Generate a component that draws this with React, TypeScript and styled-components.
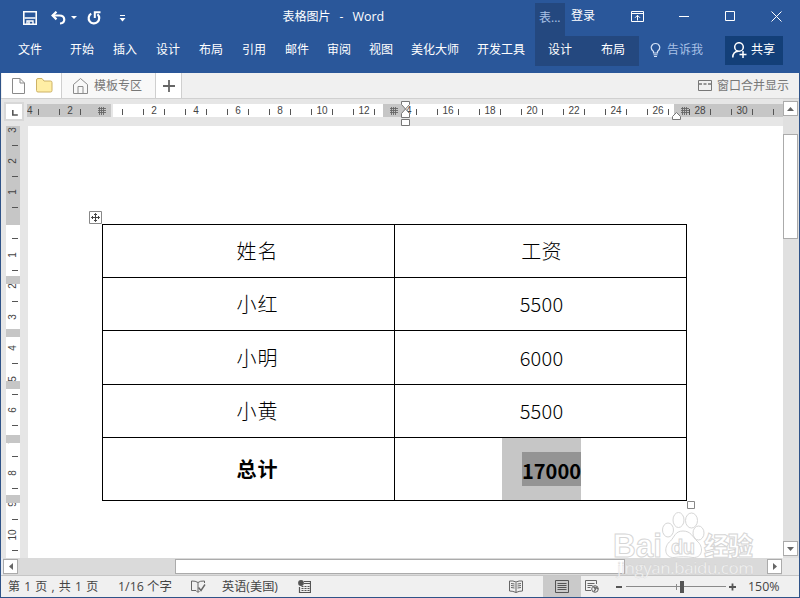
import React from 'react';
import styled, { createGlobalStyle, css } from 'styled-components';

const GlobalStyle = createGlobalStyle`
  * { box-sizing: border-box; }
  body { margin: 0; background: #f0f0f0; }
`;

const UI_FONT = '"Open Sans", "Noto Sans CJK SC", sans-serif';
const DOC_FONT = '"Noto Sans CJK SC", sans-serif';

const Window = styled.div`
  position: relative;
  width: 800px;
  height: 598px;
  overflow: hidden;
  display: flex;
  flex-direction: column;
  background: #e6e6e6;
  font-family: ${UI_FONT};
  font-size: 12px;
  line-height: 16px;
  color: #444;
  white-space: nowrap;
`;

/* ---------- title bar and ribbon tabs ---------- */

const Header = styled.header`
  height: 73px;
  flex: none;
  background: #2a579a;
  color: #fff;
`;

const TitleBar = styled.div`
  display: grid;
  grid-template-columns: 282px 253px 30px 1fr;
  height: 36px;
`;

const QuickAccess = styled.div`
  display: flex;
  align-items: center;
  padding-left: 23px;
`;

const IconSlot = styled.span<{ $ml?: number; $mt?: number }>`
  display: flex;
  flex: none;
  margin-left: ${(p) => p.$ml ?? 0}px;
  margin-top: ${(p) => p.$mt ?? 0}px;
`;

const Title = styled.div`
  display: flex;
  padding: 9px 0 0 0.5px;
  gap: 9px;
`;

const TitleApp = styled.span`
  font-size: 12.5px;
`;

const ContextGroup = styled.div`
  margin-top: 3px;
  padding: 7px 0 0 4px;
  background: #24487f;
  color: #a9c1e6;
`;

const WindowControls = styled.div`
  display: flex;
  padding-left: 6px;
`;

const SignIn = styled.span`
  padding-top: 8px;
  width: 60px;
`;

const RibbonTabs = styled.nav`
  display: flex;
  height: 30px;
`;

const Tab = styled.span<{ $w: number; $pl?: number; $ctx?: boolean }>`
  flex: none;
  width: ${(p) => p.$w}px;
  padding: 6px 0 0 ${(p) => p.$pl ?? 0}px;
  ${(p) => p.$ctx && css`background: #24487f;`}
`;

const TellMe = styled.span`
  display: flex;
  gap: 6px;
  width: 86px;
  padding: 6px 0 0 11px;
  color: #a9c1e6;
`;

const Share = styled.button`
  display: flex;
  gap: 4px;
  width: 58px;
  height: 29px;
  padding: 6px 0 0 7px;
  border: 0;
  background: #133f78;
  color: #fff;
  font: inherit;
`;

/* ---------- document tab strip ---------- */

const DocTabs = styled.div`
  display: flex;
  flex: none;
  height: 26px;
  padding-left: 2px;
  background: #f0f0f0;
  border-bottom: 1px solid #d0d0d0;
  color: #777;
`;

const DocCell = styled.div<{ $w: number; $bg: string; $pl: number; $gap?: number }>`
  display: flex;
  align-items: center;
  width: ${(p) => p.$w}px;
  padding-left: ${(p) => p.$pl}px;
  gap: ${(p) => p.$gap ?? 0}px;
  background: ${(p) => p.$bg};
  border-right: 1px solid #cfcfcf;
`;

const MergeDisplay = styled.div`
  display: flex;
  align-items: center;
  gap: 5px;
  margin-left: auto;
  padding-right: 11px;
`;

/* ---------- workspace ---------- */

const Workspace = styled.main`
  display: grid;
  grid-template-columns: 28px 755px 17px;
  grid-template-rows: 27px 432px;
  flex: none;
`;

const Corner = styled.div`
  display: flex;
  align-items: flex-start;
  justify-content: flex-end;
  padding: 3px 4px 0 0;
`;

const TabSelector = styled.div`
  display: flex;
  width: 20px;
  height: 19px;
  border: 2px solid #d8d8d8;
  background: #fff;
  padding: 6px 0 0 6px;
`;

const RulerH = styled.div`
  display: flex;
  height: 13px;
  margin: 5px 0 0 -1px;
  overflow: hidden;
  color: #444;
  background: linear-gradient(
    90deg,
    #c6c6c6 84px, #e6e6e6 84px, #e6e6e6 86px, #fff 86px, #fff 356px,
    #c6c6c6 356px, #c6c6c6 378px, #fff 378px, #fff 647px, #c6c6c6 647px
  );
`;

const UnitH = styled.div<{ $first?: boolean }>`
  display: flex;
  align-items: center;
  justify-content: ${(p) => (p.$first ? 'flex-start' : 'center')};
  flex: none;
  width: ${(p) => (p.$first ? 22 : 42)}px;
  font: 10px/13px "Liberation Sans", sans-serif;
`;

const NumH = styled.span<{ $w?: number }>`
  width: ${(p) => p.$w ?? 20}px;
  text-align: ${(p) => (p.$w ? 'left' : 'center')};
`;

const TickH = styled.i<{ $hidden?: boolean }>`
  width: 1px;
  height: 6px;
  margin-top: 2px;
  background: ${(p) => (p.$hidden ? 'transparent' : '#555')};
`;

const RulerV = styled.div`
  position: relative;
  width: 14px;
  height: 432px;
  margin-left: 6px;
  overflow: hidden;
  color: #444;
  background: linear-gradient(#c6c6c6 99px, #fff 99px);
`;

const UnitV = styled.div<{ $first?: boolean }>`
  display: flex;
  flex-direction: column;
  align-items: center;
  height: 31.15px;
  margin-top: ${(p) => (p.$first ? -4 : 0)}px;
  font: 10px/16px "Liberation Sans", sans-serif;
`;

const NumV = styled.span`
  display: block;
  height: 16px;
  width: 16px;
  text-align: center;
  transform: rotate(-90deg);
`;

const TickV = styled.i`
  width: 6px;
  height: 1px;
  margin: 7px 0 0 4px;
  background: #555;
`;

const RowMark = styled.i<{ $top: number }>`
  position: absolute;
  left: 0;
  top: ${(p) => p.$top}px;
  width: 14px;
  height: 8px;
  background: #c6c6c6;
`;

const Marker = styled.span<{ $x: number; $y: number }>`
  position: absolute;
  display: flex;
  left: ${(p) => p.$x}px;
  top: ${(p) => p.$y}px;
`;

const Page = styled.div`
  background: #fff;
  padding: 98px 0 0 74px;
`;

const Table = styled.div`
  display: grid;
  grid-template-columns: 291px 291px;
  grid-template-rows: 52px 52px 53px 52px 62px;
  gap: 1px;
  width: 585px;
  padding: 1px;
  background: #000;
  font: 20px/28px ${DOC_FONT};
  color: #000;
`;

const Cell = styled.div<{ $bold?: boolean; $label?: boolean }>`
  display: flex;
  align-items: center;
  justify-content: center;
  padding-left: ${(p) => (p.$label ? 18 : 2)}px;
  background: #fff;
  font-weight: ${(p) => (p.$bold ? 700 : 300)};
  letter-spacing: ${(p) => (p.$label ? 0.9 : 0.2)}px;
`;

const TotalCell = styled.div`
  display: flex;
  padding-left: 107px;
  background: #fff;
  font-weight: 700;
`;

const Selection = styled.div`
  display: flex;
  align-items: center;
  justify-content: flex-end;
  width: 79px;
  background: #c6c6c6;
`;

const SelectedText = styled.span`
  width: 59px;
  height: 34px;
  margin-bottom: 1px;
  background: #949494;
  line-height: 38px;
  text-align: center;
`;

/* ---------- scroll bars ---------- */

const ScrollV = styled.div`
  grid-row: 1 / 3;
  grid-column: 3;
  display: flex;
  flex-direction: column;
  padding-top: 2px;
  background: #e0e0e0;
`;

const ScrollBtn = styled.div`
  display: flex;
  align-items: center;
  justify-content: center;
  flex: none;
  width: 15px;
  height: 15px;
  border: 1px solid #ababab;
  background: #fff;
  color: #666;
`;

const ThumbV = styled.div`
  width: 15px;
  height: 105px;
  margin: 18px 0 302px;
  border: 1px solid #ababab;
  background: #fff;
`;

const ScrollH = styled.div`
  display: flex;
  flex: none;
  height: 17px;
  padding: 1px 0 0 3px;
  background: linear-gradient(90deg, #e8ecf2 3px, #dadada 3px, #dadada 782px, #e8e8e8 782px);
`;

const ThumbH = styled.div`
  width: 450px;
  height: 15px;
  margin: 0 142px 0 157px;
  border: 1px solid #ababab;
  background: #fff;
`;

/* ---------- status bar ---------- */

const StatusBar = styled.footer`
  display: grid;
  grid-template-columns: 110px 73px 31px 76px 206px 39px 38px 35px 10px 102px 1fr;
  flex: none;
  height: 23px;
  padding: 0 0 1px 8px;
  background: #f0f0f0;
  border-top: 1px solid #c6c6c6;
  line-height: 20px;
`;

const StatusCell = styled.div<{ $active?: boolean; $pl?: number; $size?: number; $space?: number }>`
  display: flex;
  align-items: center;
  padding-left: ${(p) => p.$pl ?? 0}px;
  background: ${(p) => (p.$active ? '#cacaca' : 'transparent')};
  font-size: ${(p) => p.$size ?? 12}px;
  word-spacing: ${(p) => p.$space ?? 0}px;
`;

const Edge = styled.div`
  position: absolute;
  inset: 73px 0 0 0;
  border: solid #2f5388;
  border-width: 0 1px 1px 1px;
  pointer-events: none;
`;

/* ---------- icons ---------- */

const Svg = ({ w, h, children, color = 'currentColor', sw = 1 }: {
  w: number; h: number; children: React.ReactNode; color?: string; sw?: number;
}) => (
  <svg width={w} height={h} viewBox={`0 0 ${w} ${h}`} fill="none" stroke={color} strokeWidth={sw}>
    {children}
  </svg>
);

const SaveIcon = () => (
  <Svg w={14} h={14}>
    <path d="M.8.8h12.4v12.4H.8z" strokeWidth="1.6" />
    <path d="M1.500 7h11M4 13V10h6V13" strokeWidth="1.400" />
    <path d="M6 10.500v3" strokeWidth="1.600" />
  </Svg>
);
const UndoIcon = () => (
  <Svg w={15} h={14}>
    <path d="M1.500 4.500H8.500c6 0 6.500 7.500.5 8" strokeWidth="2.200" />
    <path d="M5.500.7L1.600 4.500l3.900 3.900" strokeWidth="2.200" />
  </Svg>
);
const RepeatIcon = () => (
  <Svg w={14} h={14}>
    <path d="M4.200 2.600A5.300 5.300 0 1 0 10.500 3.200" strokeWidth="2.200" />
    <path d="M7.800 7V1.200H13.500" strokeWidth="2" />
  </Svg>
);
const MoreIcon = () => (
  <Svg w={7} h={8}>
    <path d="M1 1.500h5" />
    <path d="M.5 4h6L3.500 7.500z" fill="currentColor" stroke="none" />
  </Svg>
);
const Caret = ({ d, w, h }: { d: string; w: number; h: number }) => (
  <svg width={w} height={h} viewBox={`0 0 ${w} ${h}`}><path d={d} fill="currentColor" /></svg>
);
const RibbonIcon = () => (
  <Svg w={13} h={11}><path d="M.5.5h12v10H.5zM.5 2.500h12M6.500 9.500V4.500M4 6.800l2.500-2.500L9 6.800" /></Svg>
);
const BulbIcon = () => (
  <Svg w={11} h={16} color="#d6e3f7">
    <path d="M3.500 11v-1.500C-.8 6 1.800 1.500 5.500 1.500S11.800 6 7.500 9.500V11z" strokeWidth="1.200" />
    <path d="M3.500 12.800h4M4 14.500h3" />
  </Svg>
);
const PersonIcon = () => (
  <Svg w={15} h={16}>
    <circle cx="7" cy="5" r="4.300" strokeWidth="1.500" />
    <path d="M.8 15.500c0-4 2.500-6 5.500-6.200M7.500 12.500h7M11 9v7" strokeWidth="1.500" />
  </Svg>
);
const PageIcon = () => (
  <Svg w={13} h={16} color="#8a8a8a"><path d="M.5.5h7.500l4.500 4.500v10.500H.5zM8 .5V5h4.500" fill="#fff" /></Svg>
);
const FolderIcon = () => (
  <Svg w={17} h={15} color="#cdb266">
    <path d="M.5 2Q.5.500 2 .5h4l2 2.500h6.500q1.500 0 1.500 1.500v8q0 1.500-1.500 1.500H2q-1.500 0-1.500-1.500z" fill="#ffeea5" />
  </Svg>
);
const HomeIcon = () => (
  <Svg w={15} h={16} color="#8c8c8c"><path d="M.5 6.500l7-6 7 6V15.500H.5zM5 15.500V8.500h5v7" /></Svg>
);
const MergeIcon = () => (
  <Svg w={14} h={12} color="#777"><path d="M.5.5h13v10H.5z" /><path d="M1 4h3M5.500 4h3M10 4h3" strokeWidth="1.600" /></Svg>
);
const HashIcon = () => (
  <Svg w={8} h={8} color="#666"><path d="M1.500 0v8M3.500 0v8M5.500 0v8M0 1.500h8M0 3.500h8M0 5.500h8" strokeWidth=".9" /></Svg>
);
const ProofIcon = () => (
  <Svg w={15} h={13} color="#666">
    <path d="M7 12V2.500Q4.500.8.500 1v9.500h4.500L7 12.500l1.500-1.500M7 2.500Q9 .8 13.500 1v2" />
    <path d="M7.500 7.500l2.500 3 4-6" strokeWidth="1.400" />
  </Svg>
);
const MacroIcon = () => (
  <Svg w={13} h={13} color="#555">
    <path d="M6 1.500h6.500v11H1.500V7M6 3.500h6.500" strokeWidth="1.200" />
    <circle cx="3" cy="3" r="2.900" fill="#555" stroke="none" />
    <path d="M3.500 6.500h8M3.500 8.500h8M3.500 10.500h8" strokeDasharray="2 1" />
  </Svg>
);
const ReadIcon = () => (
  <Svg w={14} h={13} color="#666">
    <path d="M7 2.500v10M7 2Q4 .5.500 1v10q3.500 0 6.500 1.500Q10 11 13.500 11V1Q10 .5 7 2M2 3.500l3.500.5M2 5.500l3.500.5M2 7.500l3.500.5M8.500 4l3.500-.5M8.500 6l3.500-.5M8.500 8l3.500-.5" />
  </Svg>
);
const PrintIcon = () => (
  <Svg w={14} h={13} color="#555"><path d="M.5.5h13v12H.5zM2.500 3.500h9M2.500 5.500h9M2.500 7.500h9M2.500 9.500h9" /></Svg>
);
const WebIcon = () => (
  <Svg w={14} h={13} color="#666">
    <path d="M6 10.500H.5V.5h11V4M2.500 3.500h7M2.500 5.500h5M2.500 7.500h3" />
    <circle cx="10" cy="9" r="3.300" />
    <path d="M8.500 6.500l2 2.500-1.500 2.500M10.500 7l2.500 2" strokeWidth="1.400" />
  </Svg>
);

const Watermark = () => (
  <svg width="150" height="72" viewBox="0 0 150 72" fill="#fff" fillOpacity=".8" stroke="#d6d6d6" strokeWidth="1">
    <ellipse cx="66.500" cy="8" rx="5.500" ry="7.500" />
    <ellipse cx="79.500" cy="8.500" rx="6" ry="7.500" />
    <ellipse cx="56" cy="18" rx="5.500" ry="7" />
    <ellipse cx="86.500" cy="21" rx="5.500" ry="7" />
    <path d="M71 19c-8 0-8.500 6-12.500 10-7 5-6.500 17 3.500 16.500 6-1 13-1 19 0 10 .5 11-11 4-16.500-4.500-4-6-10-14-10z" />
    <text x="1" y="45" fontFamily="Liberation Sans" fontWeight="700" fontSize="33" textLength="49" lengthAdjust="spacingAndGlyphs">Bai</text>
    <text x="59" y="42" fontFamily="Liberation Sans" fontWeight="700" fontSize="20" textLength="24">du</text>
    <text x="92" y="43" fontFamily="Noto Sans CJK SC" fontWeight="900" fontSize="25" textLength="49">经验</text>
    <text x="5" y="62" fontFamily="Open Sans" fontSize="17" textLength="137" stroke="#ccc" strokeWidth=".3">jingyan.baidu.com</text>
  </svg>
);

/* ---------- data ---------- */

const TABS: [string, number][] = [
  ['文件', 52], ['开始', 43], ['插入', 43], ['设计', 43], ['布局', 43], ['引用', 43],
  ['邮件', 42], ['审阅', 42], ['视图', 42], ['美化大师', 66], ['开发工具', 58],
];
const H_UNITS = ['2', '', '2', '4', '6', '8', '10', '12', '\u00a0\u00a04', '16', '18', '20', '22', '24', '26', '28', '30', ''];
const V_UNITS = ['3', '2', '1', '', '1', '2', '3', '4', '5', '6', '7', '8', '9', '10'];
const ROW_MARKS = [150, 203, 255, 309, 369];
const ROWS = [['姓名', '工资'], ['小红', '5500'], ['小明', '6000'], ['小黄', '5500']];

export default function App() {
  return (
    <>
      <GlobalStyle />
      <Window>
        <Header>
          <TitleBar>
            <QuickAccess>
              <IconSlot><SaveIcon /></IconSlot>
              <IconSlot $ml={14} $mt={-1}><UndoIcon /></IconSlot>
              <IconSlot $ml={5} $mt={-1}><Caret w={6} h={3} d="M0 0h6L3 3z" /></IconSlot>
              <IconSlot $ml={10} $mt={-1}><RepeatIcon /></IconSlot>
              <IconSlot $ml={18}><MoreIcon /></IconSlot>
            </QuickAccess>
            <Title><span>表格图片</span><span>-</span><TitleApp>Word</TitleApp></Title>
            <ContextGroup>表...</ContextGroup>
            <WindowControls>
              <SignIn>登录</SignIn>
              <IconSlot $mt={11}><RibbonIcon /></IconSlot>
              <IconSlot $ml={35} $mt={11}><Svg w={11} h={11}><path d="M0 5.500h10" /></Svg></IconSlot>
              <IconSlot $ml={35} $mt={11}><Svg w={11} h={11}><path d="M.5.5h9v9h-9z" /></Svg></IconSlot>
              <IconSlot $ml={35} $mt={11}><Svg w={11} h={11}><path d="M.5.5l10 10M10.500.5l-10 10" /></Svg></IconSlot>
            </WindowControls>
          </TitleBar>
          <RibbonTabs>
            {TABS.map(([name, w], i) => (
              <Tab key={name} $w={i === 0 ? w + 18 : w} $pl={i === 0 ? 18 : 0}>{name}</Tab>
            ))}
            <Tab $w={53} $pl={13} $ctx>设计</Tab>
            <Tab $w={51} $pl={13} $ctx>布局</Tab>
            <TellMe><BulbIcon />告诉我</TellMe>
            <Share><PersonIcon />共享</Share>
          </RibbonTabs>
        </Header>

        <DocTabs>
          <DocCell $w={60} $bg="#fff" $pl={10} $gap={11}><PageIcon /><FolderIcon /></DocCell>
          <DocCell $w={94} $bg="#f8f8f8" $pl={11} $gap={6}><HomeIcon />模板专区</DocCell>
          <DocCell $w={26} $bg="#fff" $pl={7}><Svg w={12} h={12} color="#666" sw={1.8}><path d="M6 0v12M0 6h12" /></Svg></DocCell>
          <MergeDisplay><MergeIcon />窗口合并显示</MergeDisplay>
        </DocTabs>

        <Workspace>
          <Corner>
            <TabSelector><Svg w={6} h={6} color="#555" sw={1.6}><path d="M.8 0v5h5" /></Svg></TabSelector>
          </Corner>
          <RulerH>
            <UnitH $first>
              <NumH $w={11}>4</NumH>
              <TickH />
            </UnitH>
            {H_UNITS.map((n, i) => (
              <UnitH key={i}>
                <TickH $hidden={i === 1 || i === 8} />
                <NumH>{n}</NumH>
                <TickH $hidden={i === 17} />
              </UnitH>
            ))}
          </RulerH>
          <ScrollV>
            <ScrollBtn><Caret w={7} h={4} d="M0 4L3.500 0 7 4z" /></ScrollBtn>
            <ThumbV />
            <ScrollBtn><Caret w={7} h={4} d="M0 0h7L3.500 4z" /></ScrollBtn>
          </ScrollV>
          <RulerV>
            {V_UNITS.map((n, i) => (
              <UnitV key={i} $first={i === 0}>
                <NumV>{n}</NumV>
                <TickV />
              </UnitV>
            ))}
            {ROW_MARKS.map((t) => <RowMark key={t} $top={t} />)}
          </RulerV>
          <Page>
            <Table>
              {ROWS.map(([name, pay]) => (
                <React.Fragment key={name}>
                  <Cell $label>{name}</Cell>
                  <Cell>{pay}</Cell>
                </React.Fragment>
              ))}
              <Cell $label $bold>总计</Cell>
              <TotalCell><Selection><SelectedText>17000</SelectedText></Selection></TotalCell>
            </Table>
          </Page>
        </Workspace>

        <ScrollH>
          <ScrollBtn><Caret w={4} h={7} d="M4 0v7L0 3.500z" /></ScrollBtn>
          <ThumbH />
          <ScrollBtn><Caret w={4} h={7} d="M0 0v7l4-3.500z" /></ScrollBtn>
        </ScrollH>

        <StatusBar>
          <StatusCell $space={1.1}>第 1 页 , 共 1 页</StatusCell>
          <StatusCell $size={12.4}>1/16 个字</StatusCell>
          <StatusCell><ProofIcon /></StatusCell>
          <StatusCell $size={12.2}>英语(美国)</StatusCell>
          <StatusCell><MacroIcon /></StatusCell>
          <StatusCell $pl={5}><ReadIcon /></StatusCell>
          <StatusCell $pl={12} $active><PrintIcon /></StatusCell>
          <StatusCell $pl={4}><WebIcon /></StatusCell>
          <StatusCell><Svg w={7} h={12} color="#555"><path d="M0 6h6" strokeWidth="2" /></Svg></StatusCell>
          <StatusCell>
            <Svg w={101} h={12} color="#8a8a8a">
              <path d="M0 5.500h100M50.500 3v6" />
              <path d="M56 0v12" stroke="#555" strokeWidth="4" />
            </Svg>
          </StatusCell>
          <StatusCell $pl={1} $size={12.4}>
            <Svg w={7} h={12} color="#555"><path d="M0 6h7M3.500 2.500v7" strokeWidth="1.800" /></Svg>
            <IconSlot $ml={12}>150%</IconSlot>
          </StatusCell>
        </StatusBar>

        <Marker $x={98} $y={107}><HashIcon /></Marker>
        <Marker $x={390} $y={107}><HashIcon /></Marker>
        <Marker $x={681} $y={107}><HashIcon /></Marker>
        <Marker $x={401} $y={101}>
          <Svg w={9} h={25} color="#777">
            <path d="M.5.5h8v3L4.500 8 .5 3.500zM4.500 8L.5 12.500v4h8v-4zM.5 18.500h8v6h-8z" fill="#fff" />
          </Svg>
        </Marker>
        <Marker $x={672} $y={112}>
          <Svg w={9} h={8} color="#777"><path d="M.5 7.500v-3l4-4 4 4v3z" fill="#fff" /></Svg>
        </Marker>
        <Marker $x={89} $y={211}>
          <Svg w={13} h={13} color="#888">
            <path d="M.5.5h12v12H.5z" fill="#fff" />
            <path d="M6.500 2.500v8M2.500 6.500h8M5 4l1.500-1.500L8 4M5 9l1.500 1.500L8 9M4 5L2.500 6.500 4 8M9 5l1.500 1.500L9 8" stroke="#444" />
          </Svg>
        </Marker>
        <Marker $x={687} $y={501}>
          <Svg w={8} h={8} color="#888"><path d="M.5.5h7v7h-7z" fill="#fff" /></Svg>
        </Marker>
        <Marker $x={612} $y={512}><Watermark /></Marker>
        <Edge />
      </Window>
    </>
  );
}
